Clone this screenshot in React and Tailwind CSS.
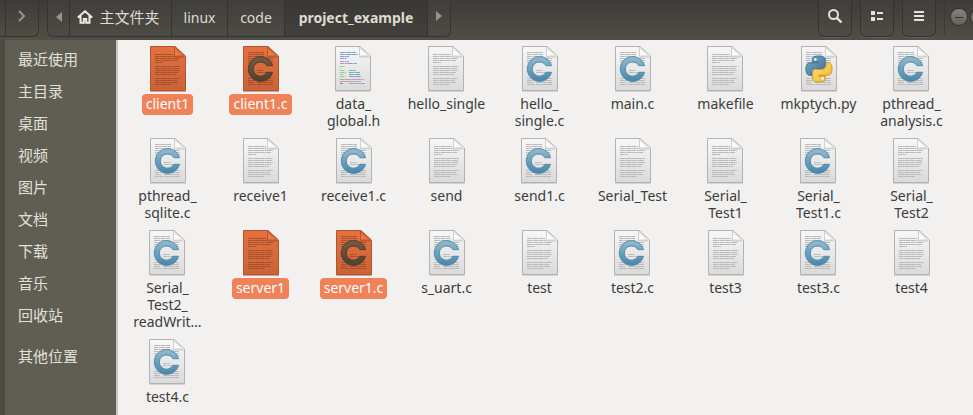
import { useState } from 'react';

const places = ['最近使用', '主目录', '桌面', '视频', '图片', '文档', '下载', '音乐', '回收站'];

const files = [
  { name: 'client1', type: 'text' },
  { name: 'client1.c', type: 'c' },
  { name: 'data_\nglobal.h', type: 'header' },
  { name: 'hello_single', type: 'text' },
  { name: 'hello_\nsingle.c', type: 'c' },
  { name: 'main.c', type: 'c' },
  { name: 'makefile', type: 'text' },
  { name: 'mkptych.py', type: 'python' },
  { name: 'pthread_\nanalysis.c', type: 'c' },
  { name: 'pthread_\nsqlite.c', type: 'c' },
  { name: 'receive1', type: 'text' },
  { name: 'receive1.c', type: 'c' },
  { name: 'send', type: 'text' },
  { name: 'send1.c', type: 'c' },
  { name: 'Serial_Test', type: 'text' },
  { name: 'Serial_\nTest1', type: 'text' },
  { name: 'Serial_\nTest1.c', type: 'c' },
  { name: 'Serial_\nTest2', type: 'text' },
  { name: 'Serial_\nTest2_\nreadWrit…', type: 'c' },
  { name: 'server1', type: 'text' },
  { name: 'server1.c', type: 'c' },
  { name: 's_uart.c', type: 'c' },
  { name: 'test', type: 'text' },
  { name: 'test2.c', type: 'c' },
  { name: 'test3', type: 'text' },
  { name: 'test3.c', type: 'c' },
  { name: 'test4', type: 'text' },
  { name: 'test4.c', type: 'c' },
];

// [x, y, width] of every line of writing on a sheet
const textLines = [
  [5, 8, 18], [5, 10, 25], [5, 12, 25], [5, 14, 23], [5, 16, 8],
  [5, 20, 25], [5, 22, 24], [5, 24, 25], [5, 26, 23], [5, 28, 21],
  [5, 32, 25], [5, 34, 22], [5, 36, 23], [5, 38, 17],
];

const codeLines = [
  [5, 6, 16], [5, 8, 16], [5, 10, 16], [5, 12, 25], [5, 14, 25], [5, 16, 25],
  [14, 24, 7], [14, 26, 14], [5, 32, 25], [5, 34, 25], [5, 36, 6], [14, 36, 16], [5, 38, 8], [14, 38, 16],
];

const headerLines = [
  [5, 6, 16, '#7ba6c6'], [5, 8, 18, '#7ba6c6'], [5, 10, 9, '#7ba6c6'], [5, 12, 7, '#7ba6c6'],
  [5, 15, 9, '#c58bc4'], [5, 17, 8, '#b48fca'], [13, 17, 9, '#7ba6c6'],
  [5, 20, 5, '#93d587'], [5, 22, 1, '#93d587'],
  [5, 24, 5, '#93d587'], [14, 24, 7, '#7ba6c6'],
  [5, 26, 6, '#93d587'], [14, 26, 11, '#7ba6c6'],
  [5, 28, 3, '#93d587'], [14, 28, 11, '#7ba6c6'],
  [5, 30, 5, '#93d587'], [14, 30, 12, '#7ba6c6'],
  [5, 33, 5, '#a9a9a9'], [10, 33, 19, '#cf91b6'],
  [5, 35, 8, '#a9a9a9'], [11, 35, 15, '#cf91b6'],
  [5, 37, 3, '#d6676f'], [14, 37, 16, '#8fa9be'],
];

const snake =
  'M14.25.18l.9.2.73.26.59.3.45.32.34.34.25.34.16.33.1.3.04.26.02.2-.01.13V8.5l-.05.63-.13.55-.21.46-.26.38-.3.31-.33.25-.35.19-.35.14-.33.1-.3.07-.26.04-.21.02H8.77l-.69.05-.59.14-.5.22-.41.27-.33.32-.27.35-.2.36-.15.37-.1.35-.07.32-.04.27-.02.21v3.06H3.17l-.21-.03-.28-.07-.32-.12-.35-.18-.36-.26-.36-.36-.35-.46-.32-.59-.28-.73-.21-.88-.14-1.05-.05-1.23.06-1.22.16-1.04.24-.87.32-.71.36-.57.4-.44.42-.33.42-.24.4-.16.36-.1.32-.05.24-.01h.16l.06.01h8.16v-.83H6.18l-.01-2.75-.02-.37.05-.34.11-.31.17-.28.25-.26.31-.23.38-.2.44-.18.51-.15.58-.12.64-.1.71-.06.77-.04.84-.02 1.27.05z';

// gradients shared by every file icon
const IconDefs = () => (
  <svg width="0" height="0" className="absolute" aria-hidden="true">
    <defs>
      <linearGradient id="sheet" x1="0" y1="0" x2="0" y2="1">
        <stop offset="0" stopColor="#f7f7f7" />
        <stop offset="1" stopColor="#dadada" />
      </linearGradient>
      <linearGradient id="sheetOn" x1="0" y1="0" x2="0" y2="1">
        <stop offset="0" stopColor="#e5713f" />
        <stop offset="1" stopColor="#ca6338" />
      </linearGradient>
      <linearGradient id="fold" x1="0" y1="1" x2="1" y2="0">
        <stop offset="0" stopColor="#ffffff" />
        <stop offset="0.35" stopColor="#fbfbfb" />
        <stop offset="0.6" stopColor="#b9b9b9" />
      </linearGradient>
      <linearGradient id="foldOn" x1="0" y1="1" x2="1" y2="0">
        <stop offset="0" stopColor="#f0804f" />
        <stop offset="0.35" stopColor="#e87745" />
        <stop offset="0.6" stopColor="#9c4a28" />
      </linearGradient>
      <linearGradient id="letter" x1="0" y1="0" x2="0" y2="1">
        <stop offset="0" stopColor="#93bbd0" />
        <stop offset="1" stopColor="#4785a9" />
      </linearGradient>
      <linearGradient id="letterOn" x1="0" y1="0" x2="0" y2="1">
        <stop offset="0" stopColor="#775a42" />
        <stop offset="1" stopColor="#4e4130" />
      </linearGradient>
      <linearGradient id="blueSnake" x1="0" y1="0" x2="1" y2="1">
        <stop offset="0" stopColor="#79a9c9" />
        <stop offset="1" stopColor="#3f6f94" />
      </linearGradient>
      <linearGradient id="yellowSnake" x1="1" y1="1" x2="0" y2="0">
        <stop offset="0" stopColor="#ffe27a" />
        <stop offset="1" stopColor="#f0b429" />
      </linearGradient>
    </defs>
  </svg>
);

const FileIcon = ({ type, selected }) => {
  const lines = type === 'header' ? headerLines : type === 'text' ? textLines : codeLines;
  return (
    <svg width="38" height="48" viewBox="-1 0 38 48" aria-hidden="true">
      <path d="M0 45.5h36" stroke={selected ? '#c9a797' : '#d5d4d2'} />
      <path
        d="M.5.5H25L35.500 10V44.500H.5Z"
        fill={selected ? 'url(#sheetOn)' : 'url(#sheet)'}
        stroke={selected ? '#b05530' : '#b2b2b2'}
      />
      {lines.map(([x, y, w, color]) => (
        <path
          key={`${x}-${y}`}
          d={`M${x} ${y + 0.5}h${w}`}
          stroke={color || (selected ? '#a64f2c' : '#b9b9b9')}
          strokeDasharray="4 .4 2 .3 5 .4"
        />
      ))}
      <path d="M24 1V11.500H35L25 1Z" fill={selected ? '#b9572f' : '#cfcfcf'} />
      <path d="M25 1V9Q25 10 27 9.500L35 9.500Z" fill={selected ? 'url(#foldOn)' : 'url(#fold)'} />
      {type === 'c' && (
        <path
          d="M29.600 19.700A12.400 12.400 0 1 0 29.600 26.300H23.900A7.200 7.200 0 1 1 23.900 19.700Z"
          fill={selected ? 'url(#letterOn)' : 'url(#letter)'}
          stroke={selected ? '#4b3e2e' : '#5089ab'}
          strokeWidth=".9"
        />
      )}
      {type === 'python' && (
        <g transform="translate(5 10) scale(1.08)" strokeWidth=".9" strokeLinejoin="round">
          <path d={snake} fill="url(#blueSnake)" stroke="#3d6a8c" />
          <path d={snake} transform="rotate(180 12 12)" fill="url(#yellowSnake)" stroke="#c7931b" />
          <circle cx="8.600" cy="3.300" r="1.200" fill="#fff" />
          <circle cx="15.400" cy="20.700" r="1.200" fill="#fff" />
        </g>
      )}
    </svg>
  );
};

const Crumb = ({ children, label, className = '' }) => (
  <button
    type="button"
    aria-label={label}
    className={`flex items-center justify-center gap-1.5 border-r border-[#34332f] pb-0.5 ${className}`}
  >
    {children}
  </button>
);

const ToolButton = ({ children, label }) => (
  <button
    type="button"
    aria-label={label}
    className="flex h-[37px] w-[34px] items-center justify-center rounded-b-md border border-t-0 border-[#35342f] bg-linear-to-b from-[#403f3b] to-[#4d4b45] pb-1 shadow-[0_1px_0_#5e5c54]"
  >
    {children}
  </button>
);

const Toolbar = () => (
  <header className="flex h-10 items-start overflow-hidden bg-linear-to-b from-[#3d3c38] to-[#504e47] text-[#dfdbd2]">
    <div className="flex h-[37px] w-[39px] shrink-0 rounded-br-md border-r border-b border-[#35342f]">
      <div className="w-1.5 border-r border-[#35342f]" />
      <button type="button" aria-label="前进" className="flex grow items-center justify-center pb-1">
        <svg width="10" height="14" viewBox="0 0 10 14" fill="none" stroke="#97948c" strokeWidth="2">
          <path d="M2 2l5 5-5 5" />
        </svg>
      </button>
    </div>

    <nav className="ml-2 flex h-[37px] shrink-0 overflow-hidden rounded-b-md border border-t-0 border-[#35342f] bg-linear-to-b from-[#403f3b] to-[#4d4b45] text-[14px]">
      <Crumb label="向左" className="w-[22px]">
        <svg width="6" height="10" viewBox="0 0 6 10" fill="#97948c"><path d="M6 0v10L0 5z" /></svg>
      </Crumb>
      <Crumb className="w-[102px] pr-1">
        <svg width="16" height="14" viewBox="0 0 16 14" fill="none" stroke="#eeebe4" strokeWidth="2">
          <path d="M.8 7.500L8 1.300l7.200 6.200M3.500 6v6.800h3.300V9h2.400v3.800h3.300V6" />
        </svg>
        <span className="text-[15px]">主文件夹</span>
      </Crumb>
      <Crumb className="w-14">linux</Crumb>
      <Crumb className="w-[57px]">code</Crumb>
      <Crumb className="w-[143px] bg-linear-to-b from-[#393834] to-[#42403b] font-bold">project_example</Crumb>
      <button type="button" aria-label="向右" className="flex w-[22px] items-center justify-center pb-1">
        <svg width="6" height="10" viewBox="0 0 6 10" fill="#97948c"><path d="M0 0v10l6-5z" /></svg>
      </button>
    </nav>

    <div className="grow" />

    <div className="flex shrink-0 gap-2">
      <ToolButton label="搜索">
        <svg width="16" height="16" viewBox="0 0 16 16" fill="none" stroke="#e6e2d9" strokeWidth="2">
          <circle cx="6.500" cy="6.500" r="4.500" />
          <path d="M9.800 9.800L14.500 14.500" strokeWidth="2.400" />
        </svg>
      </ToolButton>
      <ToolButton label="列表视图">
        <svg width="12" height="10" viewBox="0 0 12 10" fill="#e6e2d9">
          <path d="M0 0h4v4H0zM6 1h6v2H6zM0 6h4v4H0zM6 7h6v2H6z" />
        </svg>
      </ToolButton>
      <ToolButton label="菜单">
        <svg width="10" height="10" viewBox="0 0 10 10" fill="#e6e2d9">
          <path d="M0 0h10v2H0zM0 4h10v2H0zM0 8h10v2H0z" />
        </svg>
      </ToolButton>
    </div>
    <div className="ml-2 flex h-[34px] w-[29px] shrink-0 items-center gap-1 overflow-hidden border-l border-[#3a3935] pl-1.5">
      <button type="button" aria-label="最小化" className="flex size-4 shrink-0 items-center justify-center rounded-full bg-linear-to-b from-[#85837b] to-[#64625b] ring-1 ring-[#32312d]">
        <span className="h-px w-2 bg-[#35342f]" />
      </button>
      <button type="button" aria-label="最大化" className="size-4 shrink-0 rounded-full bg-[#75736b] ring-1 ring-[#32312d]" />
    </div>
  </header>
);

const App = () => {
  const [selected, setSelected] = useState(['client1', 'client1.c', 'server1', 'server1.c']);

  return (
    <div className="flex min-h-screen flex-col bg-[#f2f1f0] font-['Noto_Sans','Noto_Sans_CJK_SC',sans-serif]">
      <IconDefs />
      <Toolbar />
      <div className="flex grow">
        <aside className="w-[118px] shrink-0 border-r-2 border-l-5 border-r-[#cac6c3] border-l-[#4c4b46] bg-[#605e53] pt-[3px] text-[15px] text-[#e2e0d9]">
          <ul>
            {places.map((place) => (
              <li key={place}>
                <a href="#" className="flex h-8 items-center pl-[13px]">{place}</a>
              </li>
            ))}
          </ul>
          <a href="#" className="mt-[9px] flex h-8 items-center pl-[13px]">其他位置</a>
        </aside>

        <main className="grow pt-1.5 pl-[3px]">
          <ul className="flex flex-wrap items-start gap-y-1.5">
            {files.map(({ name, type }) => {
              const on = selected.includes(name);
              return (
                <li key={name} className="flex w-[93px] justify-center">
                  <button type="button" onClick={() => setSelected([name])} className="flex flex-col items-center">
                    <FileIcon type={type} selected={on} />
                    <span
                      className={`rounded px-1 pt-px pb-[3px] text-[14px] leading-[17px] whitespace-pre ${on ? 'bg-[#f08259] text-white' : 'text-[#3c3c3c]'}`}
                    >
                      {name}
                    </span>
                  </button>
                </li>
              );
            })}
          </ul>
        </main>
      </div>
    </div>
  );
};

export default App;
